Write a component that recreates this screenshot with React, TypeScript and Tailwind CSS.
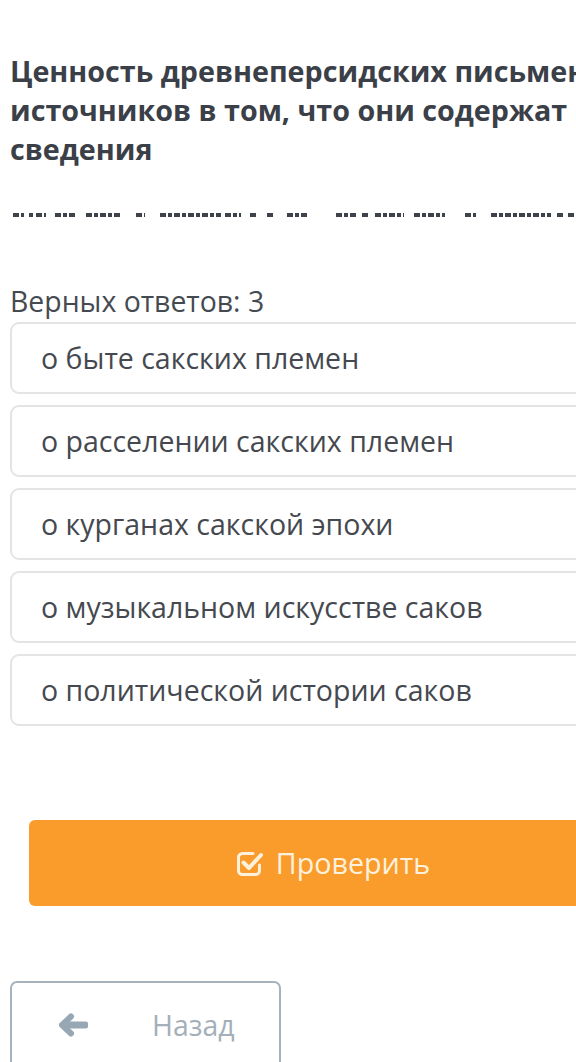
import React from "react";

const options = [
  "о быте сакских племен",
  "о расселении сакских племен",
  "о курганах сакской эпохи",
  "о музыкальном искусстве саков",
  "о политической истории саков",
];

const groups: [number, number][] = [
  [13, 24], [29, 33], [36, 46], [55, 77], [86, 121], [136, 145], [160, 221], [225, 241],
  [250, 257], [267, 274], [287, 309], [336, 358], [362, 370], [375, 404], [414, 445],
  [465, 476], [491, 551], [557, 564], [568, 576],
];

const dashes: [number, number][] = [];
groups.forEach(([s, e]) => {
  let x = s;
  let k = 0;
  while (x < e) {
    const w = Math.min(k % 2 === 0 ? 6 : 4, e - x);
    dashes.push([x, w]);
    x += w + 2;
    k++;
  }
});

function CheckSquare() {
  return (
    <svg width="28" height="27" viewBox="0 0 28 27" fill="none" className="shrink-0">
      <path
        d="M17 3.5H6.5A4 4 0 0 0 2.5 7.5V20.5A4 4 0 0 0 6.5 24.5H19.5A4 4 0 0 0 23.5 20.5V15"
        stroke="currentColor"
        strokeWidth="3"
        strokeLinecap="round"
      />
      <path
        d="M7.5 12.5L13 18L25 5"
        stroke="currentColor"
        strokeWidth="4"
        strokeLinecap="round"
        strokeLinejoin="round"
      />
    </svg>
  );
}

function ArrowLeft() {
  return (
    <svg width="30" height="24" viewBox="0 0 30 24" fill="none" className="shrink-0">
      <path d="M27 12H6" stroke="currentColor" strokeWidth="7" strokeLinecap="round" />
      <path
        d="M13 3.5L4 12L13 20.5"
        stroke="currentColor"
        strokeWidth="6"
        strokeLinecap="round"
        strokeLinejoin="round"
      />
    </svg>
  );
}

export default function App() {
  return (
    <div
      className="w-[576px] h-[1062px] overflow-hidden bg-white"
      style={{ fontFamily: '"Open Sans", "Noto Sans", sans-serif' }}
    >
      <div className="pl-[10px] pt-[51px]">
        <h1 className="whitespace-nowrap text-[28.7px] leading-[39px] font-bold text-[#3b3f48]">
          Ценность древнеперсидских письменных
          <br />
          источников в том, что они содержат
          <br />
          сведения
        </h1>
      </div>

      <div className="relative h-[4px] mt-[45px]">
        {dashes.map(([x, w], i) => (
          <span
            key={i}
            className="absolute top-0 h-[4px] bg-[#3e424b]"
            style={{ left: x, width: w }}
          />
        ))}
      </div>

      <div className="pl-[10px] pt-[67px]">
        <div className="text-[28.4px] leading-[34px] text-[#444a50] whitespace-nowrap">
          Верных ответов: 3
        </div>
        <div className="flex flex-col gap-[11px] mt-[4px]">
          {options.map((o) => (
            <div
              key={o}
              className="w-[620px] h-[72px] rounded-[9px] border-2 border-[#e4e4e4] flex items-center pl-[29px] text-[28.5px] text-[#45494f] whitespace-nowrap"
            >
              {o}
            </div>
          ))}
        </div>
      </div>

      <div className="pl-[29px] pt-[94px]">
        <div className="w-[608px] h-[86px] rounded-[6px] bg-[#fa9c2c] flex items-center justify-center gap-[12px] text-[#fdf1de]">
          <CheckSquare />
          <span className="text-[28.7px] leading-none">Проверить</span>
        </div>
      </div>

      <div className="pl-[10px] pt-[75px]">
        <div className="w-[271px] h-[100px] rounded-[7px] border-2 border-[#a7b3bc] flex items-start pt-[24px]">
          <div className="ml-[46px] mt-[6px] text-[#97a7b4]">
            <ArrowLeft />
          </div>
          <span className="ml-[64px] text-[28.4px] leading-[36px] text-[#a3afb9]">Назад</span>
        </div>
      </div>
    </div>
  );
}
